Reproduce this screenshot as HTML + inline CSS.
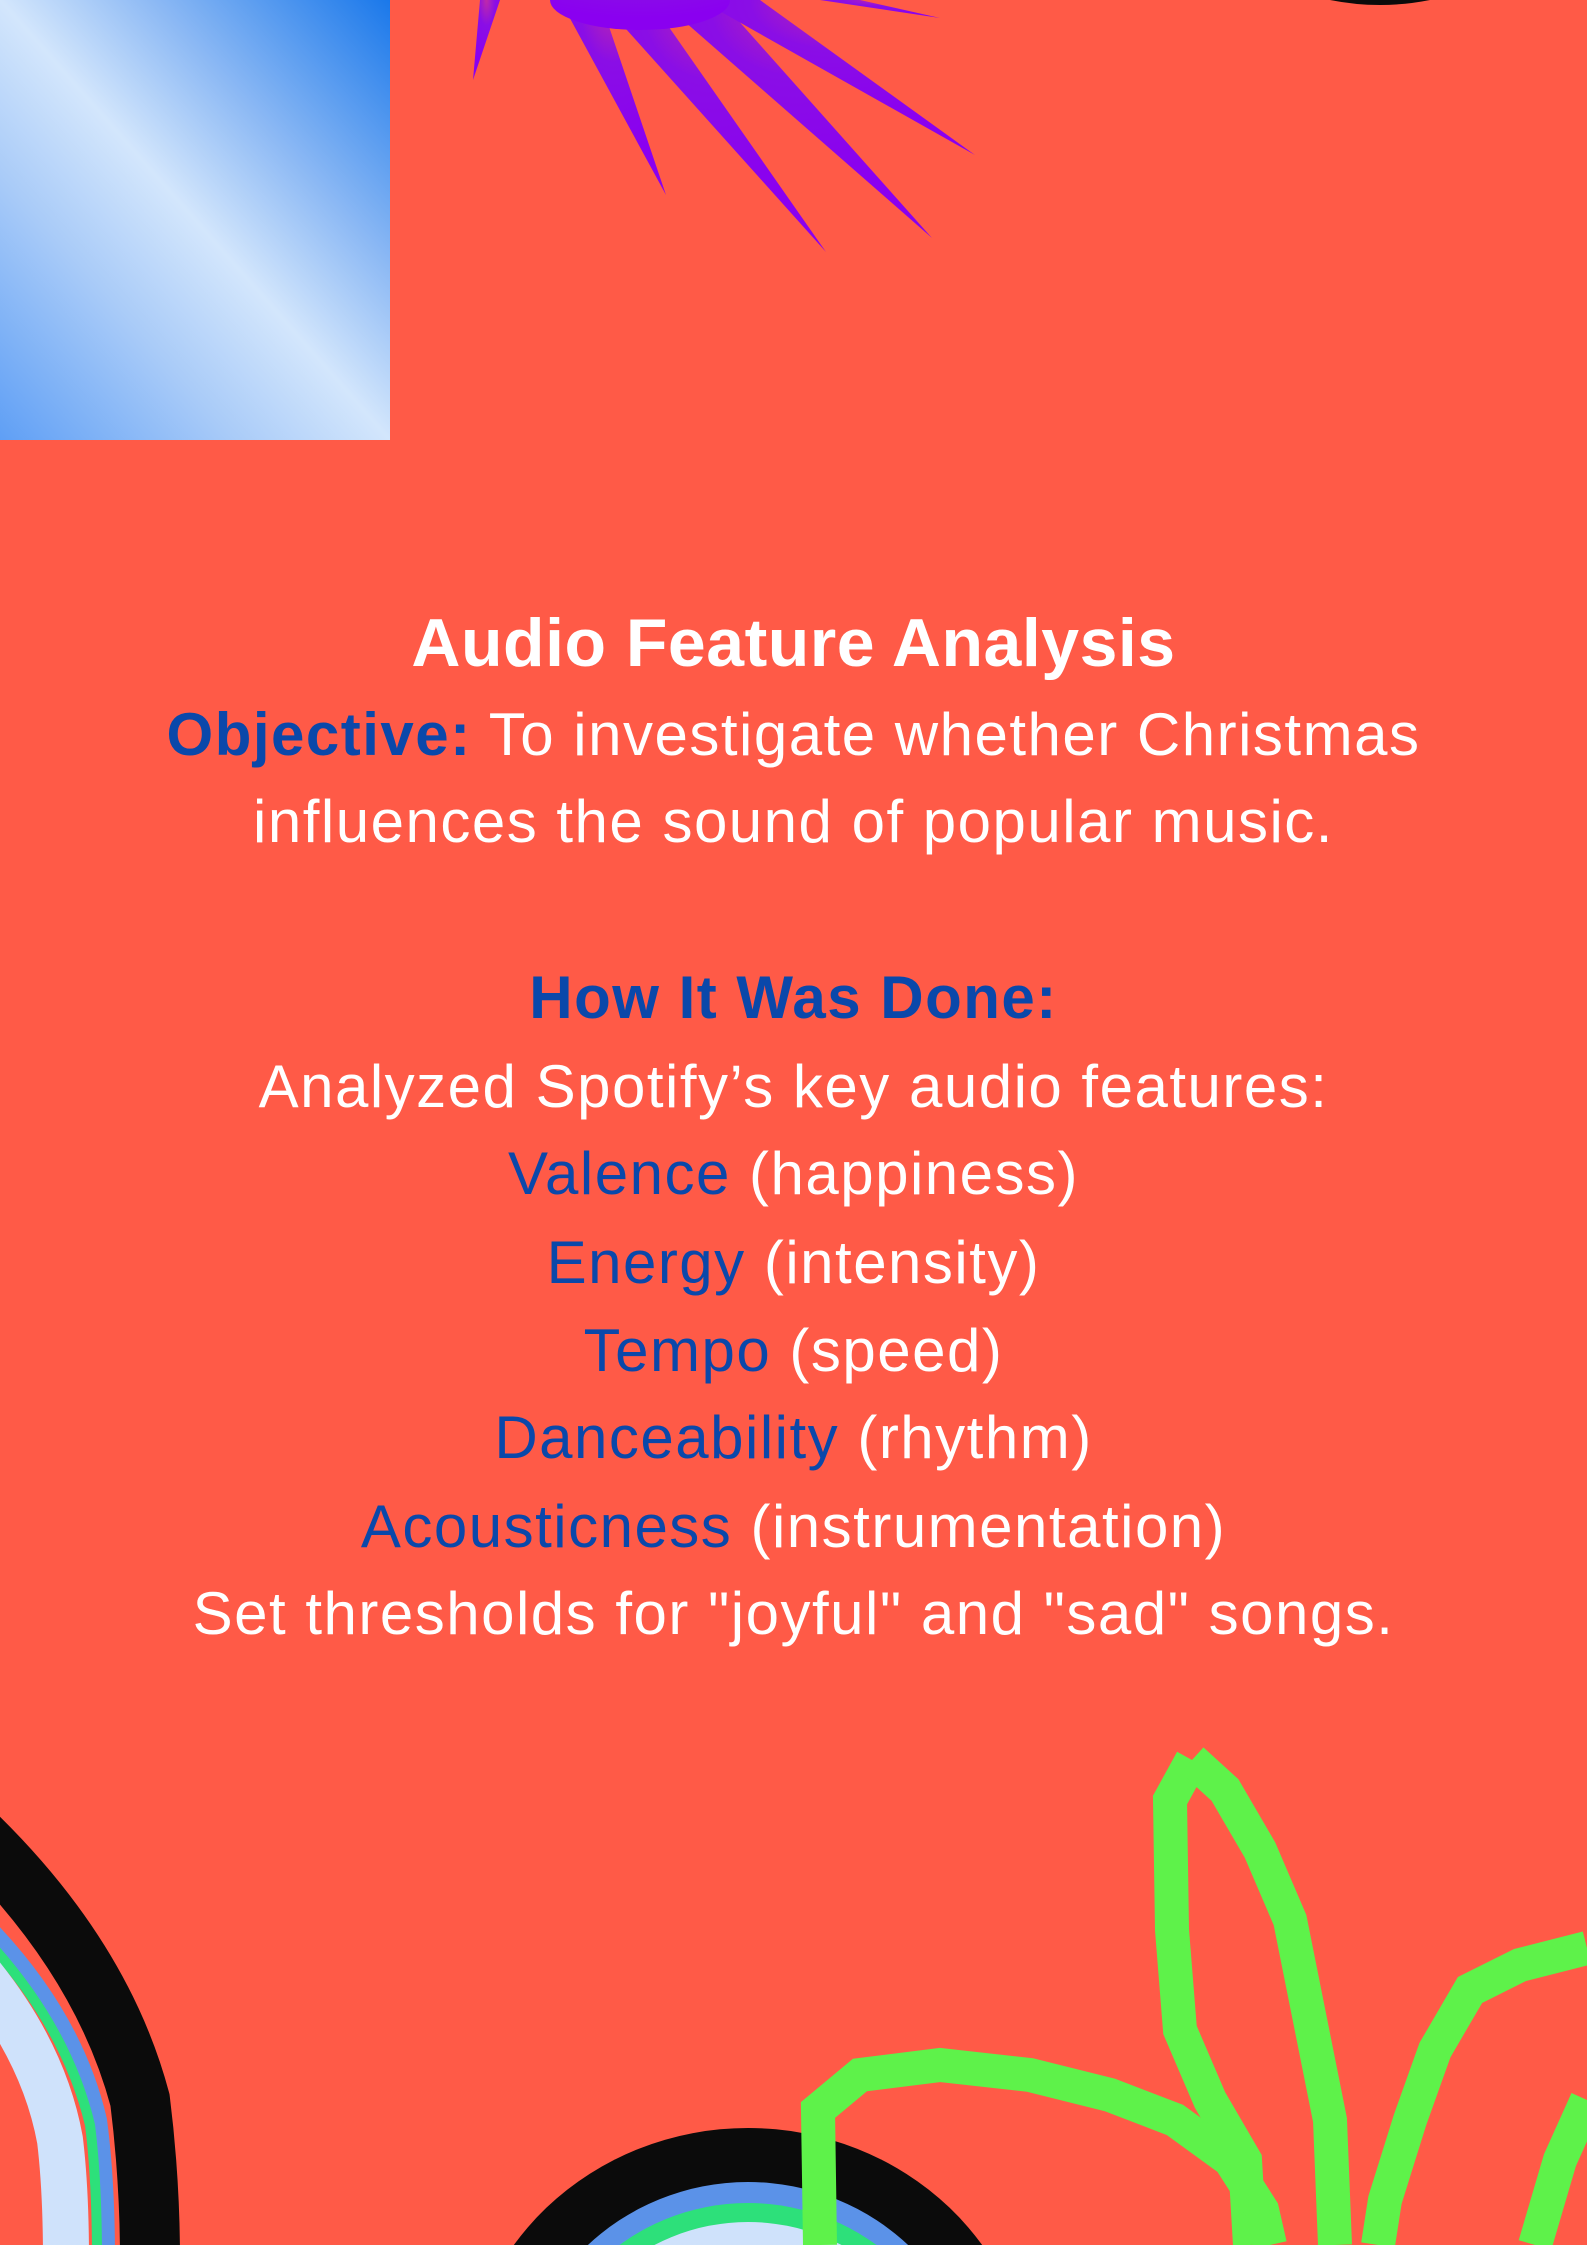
<!DOCTYPE html>
<html><head><meta charset="utf-8"><style>
html,body{margin:0;padding:0}
body{width:1587px;height:2245px;position:relative;overflow:hidden;background:#FF5A47;font-family:"Liberation Sans",sans-serif;}
svg{position:absolute;left:0;top:0}
.l{position:absolute;left:0;width:1587px;text-align:center;color:#fff;font-size:60px;letter-spacing:1.5px;line-height:70px;white-space:nowrap}
.b{color:#0A48AA}
.t{font-weight:bold;font-size:68px;letter-spacing:0.5px}
</style></head><body>
<svg width="1587" height="2245" viewBox="0 0 1587 2245">
<defs>
<linearGradient id="bl" x1="0" y1="1" x2="1" y2="0">
<stop offset="0" stop-color="#5f9ff5"/><stop offset="0.3" stop-color="#a9cbf8"/><stop offset="0.5" stop-color="#d3e6fc"/><stop offset="0.7" stop-color="#8bb8f4"/><stop offset="1" stop-color="#1a78ea"/>
</linearGradient>
<radialGradient id="pu" cx="0.5" cy="0" r="0.8"><stop offset="0" stop-color="#c02aa8"/><stop offset="0.4" stop-color="#8a0ee6"/><stop offset="1" stop-color="#8a00f0"/></radialGradient>
</defs>
<rect x="0" y="0" width="390" height="440" fill="url(#bl)"/>
<g fill="url(#pu)">
<path d="M480 0 L473 80 L500 0Z"/>
<path d="M560 0 L666 195 L600 0Z"/>
<path d="M600 0 L826 252 L650 0Z"/>
<path d="M660 0 L932 238 L720 0Z"/>
<path d="M700 0 L975 155 L760 0Z"/>
<path d="M820 0 L940 18 L860 0Z"/>
<ellipse cx="640" cy="0" rx="90" ry="30"/>
</g>
<path d="M1330 0 Q1380 10 1430 0Z" fill="#0b0b0b"/>
<g fill="none">
<path d="M-40 1820 Q100 1950 140 2100 Q150 2180 150 2260" stroke="#0b0b0b" stroke-width="60"/>
<path d="M-60 1880 Q70 1990 100 2120 Q108 2180 108 2260" stroke="#5b92e8" stroke-width="14"/>
<path d="M-60 1895 Q60 2000 90 2125 Q97 2180 97 2260" stroke="#2de07a" stroke-width="10"/>
<path d="M-60 1930 Q40 2030 60 2140 Q66 2190 66 2260" stroke="#cfe2fb" stroke-width="46"/>
</g>
<ellipse cx="748" cy="2400" rx="285" ry="272" fill="#0b0b0b"/>
<ellipse cx="748" cy="2410" rx="232" ry="228" fill="#5b92e8"/>
<ellipse cx="748" cy="2415" rx="215" ry="212" fill="#2de07a"/>
<ellipse cx="748" cy="2420" rx="200" ry="198" fill="#cfe2fb"/>
<g fill="none" stroke="#5EF24A" stroke-width="34" stroke-linejoin="miter">
<path d="M1192 1760 L1170 1800 L1172 1930 L1180 2030 L1210 2100 L1245 2160 L1250 2245"/>
<path d="M1192 1760 L1225 1790 L1260 1850 L1290 1920 L1310 2020 L1330 2120 L1335 2245"/>
<path d="M1587 1948 L1520 1965 L1470 1990 L1435 2050 L1410 2120 L1385 2200 L1378 2245"/>
<path d="M1587 2100 L1560 2160 L1535 2245"/>
<path d="M820 2245 L818 2110 L860 2075 L940 2065 L1030 2075 L1110 2095 L1175 2120 L1230 2160 L1262 2210 L1270 2245"/>
</g>
</svg>
<div class="l t" style="top:608px">Audio Feature Analysis</div>
<div class="l" style="top:700px"><b class="b">Objective:</b> To investigate whether Christmas</div>
<div class="l" style="top:787px">influences the sound of popular music.</div>
<div class="l b" style="top:963px;font-weight:bold">How It Was Done:</div>
<div class="l" style="top:1052px">Analyzed Spotify’s key audio features:</div>
<div class="l" style="top:1139px"><span class="b">Valence</span> (happiness)</div>
<div class="l" style="top:1228px"><span class="b">Energy</span> (intensity)</div>
<div class="l" style="top:1316px"><span class="b">Tempo</span> (speed)</div>
<div class="l" style="top:1403px"><span class="b">Danceability</span> (rhythm)</div>
<div class="l" style="top:1492px"><span class="b">Acousticness</span> (instrumentation)</div>
<div class="l" style="top:1579px">Set thresholds for "joyful" and "sad" songs.</div>
</body></html>
